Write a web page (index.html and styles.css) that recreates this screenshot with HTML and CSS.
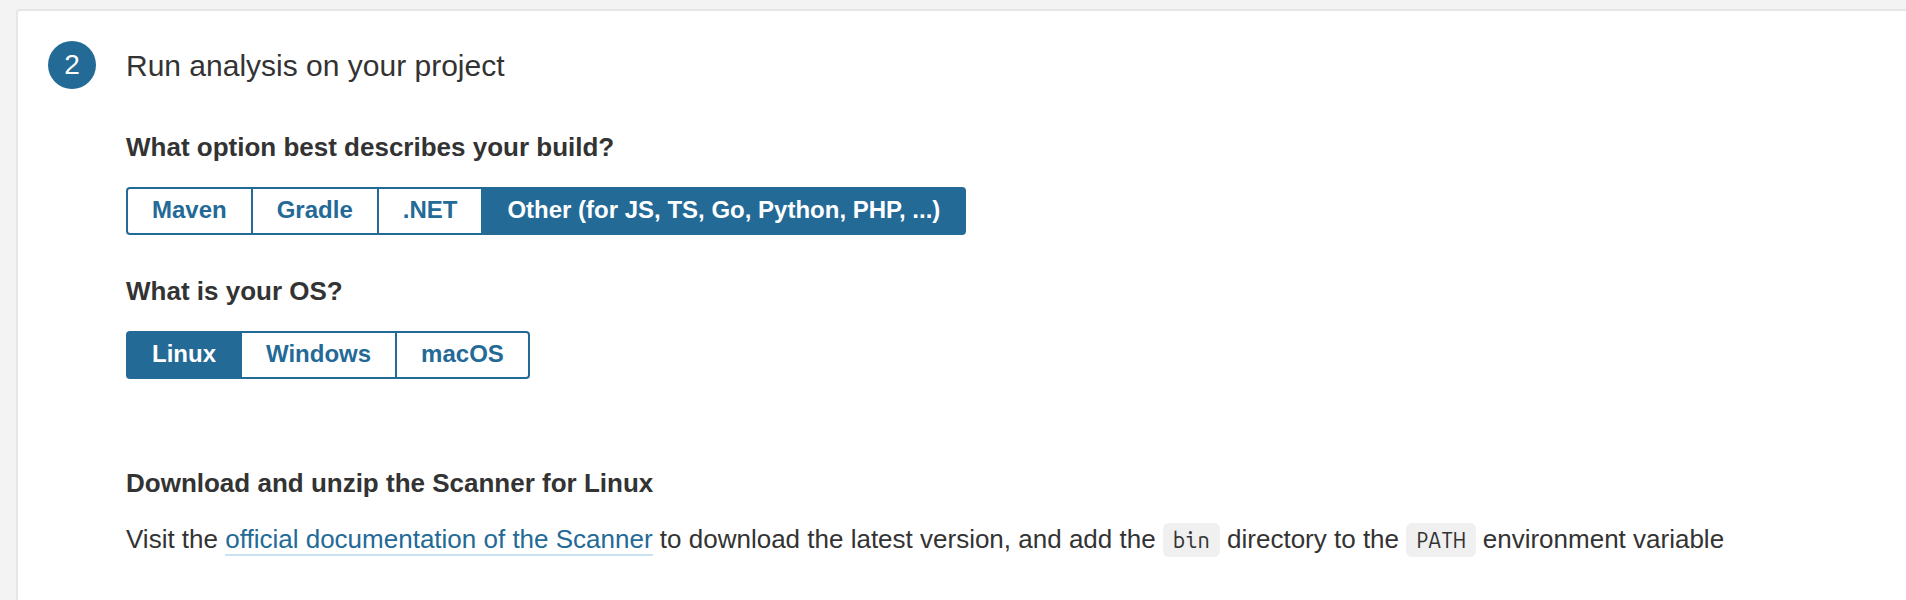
FILE: index.html
```html
<!DOCTYPE html>
<html lang="en">
<head>
<meta charset="utf-8">
<title>Run analysis on your project</title>
<link rel="stylesheet" href="styles.css">
</head>
<body>
<main class="step">
  <span class="step-number">2</span>
  <div class="step-body">
    <h2 class="step-title">Run analysis on your project</h2>
    <section class="question">
      <h3 class="label" id="build-label">What option best describes your build?</h3>
      <div class="toggle" role="group" aria-labelledby="build-label">
        <button type="button" class="option">Maven</button>
        <button type="button" class="option">Gradle</button>
        <button type="button" class="option">.NET</button>
        <button type="button" class="option selected" aria-pressed="true">Other (for JS, TS, Go, Python, PHP, ...)</button>
      </div>
    </section>
    <section class="question">
      <h3 class="label" id="os-label">What is your OS?</h3>
      <div class="toggle" role="group" aria-labelledby="os-label">
        <button type="button" class="option selected" aria-pressed="true">Linux</button>
        <button type="button" class="option">Windows</button>
        <button type="button" class="option">macOS</button>
      </div>
    </section>
    <section class="instructions">
      <h3 class="label">Download and unzip the Scanner for Linux</h3>
      <p class="text">Visit the <a class="link" href="#">official documentation of the Scanner</a> to download the latest version, and add the <code class="code">bin</code> directory to the <code class="code">PATH</code> environment variable</p>
    </section>
  </div>
</main>
</body>
</html>
```

FILE: styles.css
```css
* {
  box-sizing: border-box;
}

body {
  margin: 0;
  padding: 9px 0 0 16px;
  background: #f3f3f3;
  color: #333;
  font-family: "Liberation Sans", Arial, sans-serif;
  font-size: 26px;
  line-height: 36px;
}

h2,
h3,
p {
  margin: 0;
}

.step {
  display: flex;
  gap: 30px;
  min-height: calc(100vh - 9px);
  padding: 30px 0 30px 30px;
  border: 2px solid #e6e6e6;
  border-width: 2px 0 0 2px;
  border-top-left-radius: 4px;
  background: #fff;
}

.step-number {
  flex: none;
  width: 48px;
  height: 48px;
  border-radius: 50%;
  background: #236a97;
  color: #fff;
  font-size: 28px;
  line-height: 48px;
  text-align: center;
}

.step-title {
  margin-bottom: 38px;
  font-size: 30px;
  font-weight: 400;
  line-height: 50px;
}

.question {
  margin-bottom: 38px;
}

.label {
  font-size: 26px;
  font-weight: 700;
}

.toggle {
  display: flex;
  margin-top: 22px;
}

.option {
  height: 48px;
  margin: 0 0 0 -2px;
  padding: 0 24px 2px;
  border: 2px solid #236a97;
  background: #fff;
  color: #236a97;
  font-family: inherit;
  font-size: 24px;
  font-weight: 700;
  line-height: 40px;
}

.option:first-child {
  margin-left: 0;
  border-radius: 4px 0 0 4px;
}

.option:last-child {
  border-radius: 0 4px 4px 0;
}

.option.selected {
  background: #236a97;
  color: #fff;
}

.instructions {
  margin-top: 86px;
}

.text {
  margin-top: 20px;
}

.link {
  border-bottom: 2px solid #cae3f2;
  color: #236a97;
  text-decoration: none;
}

.code {
  padding: 4px 10px 5px;
  border-radius: 6px;
  background: #f0f0f0;
  font-family: "Ubuntu Mono", "Liberation Mono", monospace;
  font-size: 22px;
  line-height: 24px;
}
```
